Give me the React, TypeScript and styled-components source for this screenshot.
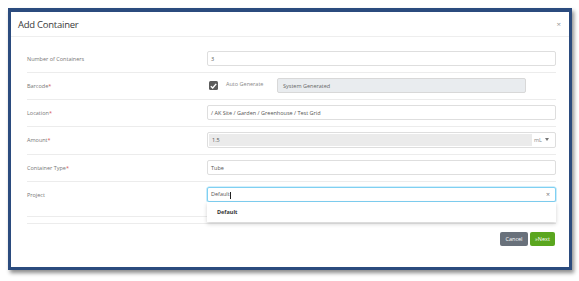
import React from 'react';
import styled, {createGlobalStyle} from "styled-components";

const GlobalStyle = createGlobalStyle`
  html, body {
    margin: 0;
    background: #ffffff;
  }
  body {
    padding: 8px;
    font-family: "Open Sans", "Liberation Sans", sans-serif;
  }
`

type RowProps = {
    label: string
    required?: boolean
    children: React.ReactNode
    last?: boolean
}

const FormRow: React.FC<RowProps> = ({label, required, children, last}) => {
    return (
        <StRow $last={last}>
            <StLabel>
                {label}{required && <StStar>*</StStar>}
            </StLabel>
            <StField>{children}</StField>
        </StRow>
    )
}

export default function App() {
    return (
        <>
            <GlobalStyle/>
            <StFrame>
                <StHeader>
                    <StTitle>Add Container</StTitle>
                    <StClose>×</StClose>
                </StHeader>
                <StBody>
                    <FormRow label={'Number of Containers'}>
                        <StInput>3</StInput>
                    </FormRow>
                    <FormRow label={'Barcode'} required>
                        <StBarcode>
                            <StCheck>
                                <svg width="7" height="6" viewBox="0 0 7 6">
                                    <path d="M0.8 3.2 L2.7 5 L6.2 0.9" fill="none" stroke="#fff" strokeWidth="1.4"/>
                                </svg>
                            </StCheck>
                            <StAuto>Auto Generate</StAuto>
                            <StDisabled>System Generated</StDisabled>
                        </StBarcode>
                    </FormRow>
                    <FormRow label={'Location'} required>
                        <StInput>/ AK Site / Garden / Greenhouse / Test Grid</StInput>
                    </FormRow>
                    <FormRow label={'Amount'} required>
                        <StInput $tall>
                            <StAmountValue>1.5</StAmountValue>
                            <StUnit>mL <StCaret/></StUnit>
                        </StInput>
                    </FormRow>
                    <FormRow label={'Container Type'} required>
                        <StInput>Tube</StInput>
                    </FormRow>
                    <FormRow label={'Project'} last>
                        <StInput $focused>
                            <span>Default<StCursor/></span>
                            <StClear>×</StClear>
                        </StInput>
                        <StMenu>
                            <StMenuItem>Default</StMenuItem>
                        </StMenu>
                    </FormRow>
                    <StFooter>
                        <StButton $variant={'cancel'}>Cancel</StButton>
                        <StButton $variant={'next'}>»Next</StButton>
                    </StFooter>
                </StBody>
            </StFrame>
        </>
    )
}

const StFrame = styled.div`
  width: 558px;
  height: 255px;
  border: 3px solid #2b4b7e;
  border-top-width: 4px;
  background: #fff;
  box-shadow: 2px 3px 4px rgba(0, 0, 0, 0.45);
  display: flex;
  flex-direction: column;
`

const StHeader = styled.div`
  height: 24px;
  border-bottom: 1px solid #eeeeee;
  display: flex;
  align-items: center;
  justify-content: space-between;
  padding: 0 8px 0 7px;
`

const StTitle = styled.div`
  font-size: 9.5px;
  color: #3a3a3a;
  letter-spacing: -0.25px;
`

const StClose = styled.div`
  font-size: 8px;
  color: #999;
  margin-top: -2px;
`

const StBody = styled.div`
  padding: 9px 13px 0 16px;
  display: flex;
  flex-direction: column;
`

const StRow = styled.div<{ $last?: boolean }>`
  display: flex;
  align-items: center;
  padding: 5px 0 ${p => p.$last ? '14px' : '6px'} 0;
  border-bottom: 1px solid #ececec;
  position: relative;
`

const StLabel = styled.div`
  width: 180px;
  font-size: 5.5px;
  color: #777;
`

const StStar = styled.span`
  color: #d9534f;
`

const StField = styled.div`
  flex: 1;
  position: relative;
`

const StInput = styled.div<{ $focused?: boolean, $tall?: boolean }>`
  height: ${p => p.$tall ? '14px' : '13px'};
  border: 1px solid ${p => p.$focused ? '#7fd0f2' : '#dedede'};
  border-radius: 2px;
  display: flex;
  align-items: center;
  justify-content: space-between;
  padding-left: ${p => p.$tall ? '0' : '3px'};
  font-size: 5.5px;
  color: #555;
  box-shadow: ${p => p.$focused ? '0 0 0 0.6px #a9e0f7' : 'none'};
`

const StAmountValue = styled.div`
  flex: 1;
  align-self: stretch;
  background: #ebebeb;
  display: flex;
  align-items: center;
  padding-left: 3px;
  margin: 1px 0 1px 1px;
`

const StUnit = styled.div`
  width: 21px;
  padding-left: 2px;
  display: flex;
  align-items: center;
  gap: 3px;
  color: #888;
`

const StCaret = styled.span`
  width: 0;
  height: 0;
  border-left: 2.5px solid transparent;
  border-right: 2.5px solid transparent;
  border-top: 3px solid #777;
  margin-top: -2px;
`

const StCursor = styled.span`
  display: inline-block;
  width: 0.6px;
  height: 7px;
  background: #222;
  vertical-align: middle;
  margin-left: 0.5px;
`

const StClear = styled.span`
  font-size: 7px;
  color: #777;
  margin-right: 5px;
`

const StBarcode = styled.div`
  display: flex;
  align-items: center;
  height: 15px;
  padding-left: 2px;
`

const StCheck = styled.div`
  width: 9px;
  height: 9px;
  border-radius: 1.5px;
  background: #5b5b5b;
  display: flex;
  align-items: center;
  justify-content: center;
`

const StAuto = styled.div`
  font-size: 5.5px;
  color: #888;
  margin-left: 8px;
  width: 51px;
  align-self: flex-start;
  margin-top: 2px;
`

const StDisabled = styled.div`
  width: 242px;
  height: 13px;
  border: 1px solid #d8d8d8;
  border-radius: 2px;
  background: #e9ecef;
  font-size: 5.5px;
  color: #666;
  display: flex;
  align-items: center;
  padding-left: 5px;
`

const StMenu = styled.div`
  position: absolute;
  left: 0;
  right: 0;
  top: 100%;
  height: 20px;
  background: #fff;
  box-shadow: 0 2px 4px rgba(0, 0, 0, 0.18);
  display: flex;
  align-items: center;
  z-index: 2;
`

const StMenuItem = styled.div`
  font-size: 5.5px;
  font-weight: 700;
  color: #333;
  padding-left: 10px;
`

const StFooter = styled.div`
  margin-top: 6px;
  border-top: 1px solid #ececec;
  padding-top: 8px;
  display: flex;
  justify-content: flex-end;
  gap: 2px;
  padding-right: 1px;
`

const StButton = styled.div<{ $variant: 'cancel' | 'next' }>`
  height: 14px;
  padding: 0 ${p => p.$variant === 'cancel' ? '4px' : '3px'};
  min-width: ${p => p.$variant === 'cancel' ? '20px' : '19px'};
  border-radius: 2px;
  background: ${p => p.$variant === 'cancel' ? '#69717b' : '#5aa61f'};
  color: #fff;
  font-size: 5.5px;
  display: flex;
  align-items: center;
  justify-content: center;
`
